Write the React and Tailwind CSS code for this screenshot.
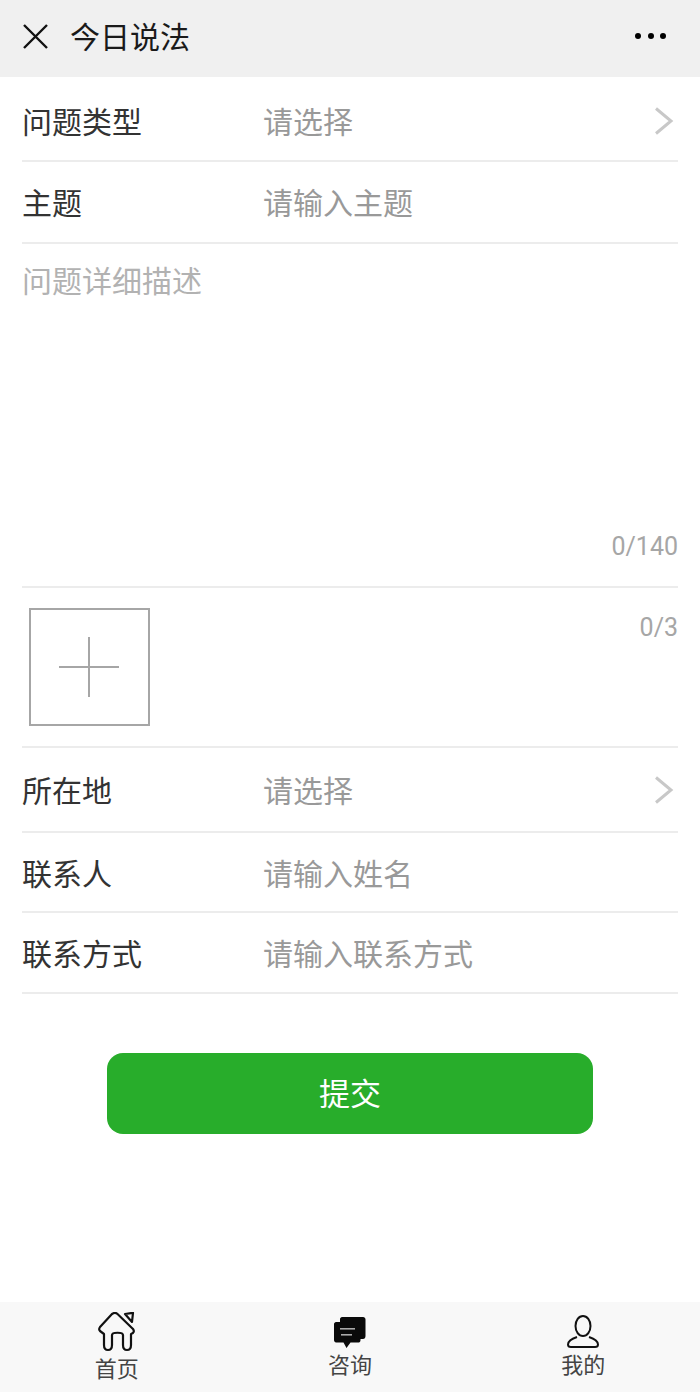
const Chevron = () => (
  <svg width="20" height="28" viewBox="0 0 20 28" fill="none" className="shrink-0 mt-[3px] mr-[4px]">
    <path d="M2 1.500 L17 14 L2 26.500" stroke="#c8c8c8" strokeWidth="3" />
  </svg>
);

const Row = ({ label, value, height, arrow }) => (
  <div className={`flex items-center border-b-2 border-[#ececec] ${height}`}>
    <div className="w-[241px] text-[30px] text-[#333333] leading-none">{label}</div>
    <div className="flex-1 text-[30px] text-[#999999] leading-none">{value}</div>
    {arrow && <Chevron />}
  </div>
);

const TabItem = ({ icon, label, textClass }) => (
  <div className="flex flex-col items-center">
    {icon}
    <span className={`text-[22px] leading-none text-[#444444] ${textClass}`}>{label}</span>
  </div>
);

const HomeIcon = (
  <svg width="38" height="40" viewBox="0 0 38 40" fill="none" stroke="#111111" strokeWidth="2.2" strokeLinejoin="round">
    <path d="M10 38 C7 38 6 36 6 33 V22 L2 19 C0.8 17.8 1 16.5 2 15 L14 2 C16 0.6 18 0.6 19.5 2 L35 17 C36.5 19 36 21 33 22 V33 C33 36 32 38 29 38 C26 38 25 36 25 33 V23 C25 20 14 20 14 23 V33 C14 36 13 38 10 38 Z" />
    <path d="M27 2 L35 0.8 L34 10 Z" />
  </svg>
);

const ChatIcon = (
  <svg width="32" height="32" viewBox="0 0 32 32">
    <path d="M8 1 H29 C30.5 1 31.5 2 31.5 3.500 V20 C31.5 22 30.500 23 29 23 H24 V8 H6 V3 C6 2 7 1 8 1 Z" fill="#0a0a0a" />
    <path d="M2 6 H24 C25.500 6 26.500 7 26.500 8.500 V24 C26.500 26 25.500 26.500 24 26.500 H16.500 L12.500 32 L9.500 26.500 H2 C1 26.500 0 25.500 0 24 V8 C0 7 1 6 2 6 Z" fill="#0a0a0a" />
    <rect x="6" y="12" width="15" height="1.600" fill="#aaaaaa" />
    <rect x="7" y="18" width="11" height="1.600" fill="#aaaaaa" />
  </svg>
);

const UserIcon = (
  <svg width="32" height="34" viewBox="0 0 32 34" fill="none" stroke="#111111" strokeWidth="2">
    <ellipse cx="16" cy="11" rx="7.500" ry="10" />
    <path d="M10 22 C4 24 1 26 1 29.500 C1 31 2 32 4 32 H28 C30 32 31 31 31 29.500 C31 26 28 24 22 22" />
  </svg>
);

export default function App() {
  return (
    <div className="w-[700px] h-[1392px] flex flex-col bg-white font-['Noto_Sans_CJK_SC','Liberation_Sans',sans-serif]">
      <header className="h-[77px] bg-[#f0f0f0] flex items-center pl-[23px] pr-[34px] pb-[5px] shrink-0">
        <svg width="25" height="25" viewBox="0 0 25 25" stroke="#111111" strokeWidth="2.4">
          <path d="M1 1 L24 24 M24 1 L1 24" />
        </svg>
        <span className="ml-[22px] mb-[3px] text-[30px] leading-none text-[#1a1a1a]">今日说法</span>
        <div className="ml-auto flex gap-[6.5px]">
          <span className="w-[6px] h-[6px] rounded-full bg-black"></span>
          <span className="w-[6px] h-[6px] rounded-full bg-black"></span>
          <span className="w-[6px] h-[6px] rounded-full bg-black"></span>
        </div>
      </header>

      <main className="flex-1 px-[22px]">
        <Row label="问题类型" value="请选择" height="h-[85px] pt-[2px]" arrow />
        <Row label="主题" value="请输入主题" height="h-[82px] pb-[2px]" />

        <div className="h-[344px] border-b-2 border-[#ececec] flex flex-col pt-[20px] pb-[27px]">
          <div className="text-[30px] leading-none text-[#b2b2b2]">问题详细描述</div>
          <div className="mt-auto text-right text-[25px] leading-none text-[#a6a6a6] font-['Roboto',sans-serif]">0/140</div>
        </div>

        <div className="h-[160px] border-b-2 border-[#ececec] flex justify-between pl-[7px] pt-[20px]">
          <div className="w-[121px] h-[118px] border-2 border-[#a6a6a6] flex items-center justify-center">
            <svg width="60" height="60" viewBox="0 0 60 60" stroke="#a6a6a6" strokeWidth="2" className="mr-[2px]">
              <path d="M30 0 V60 M0 30 H60" />
            </svg>
          </div>
          <div className="text-[25px] leading-none text-[#a6a6a6] pt-[7px] font-['Roboto',sans-serif]">0/3</div>
        </div>

        <Row label="所在地" value="请选择" height="h-[85px] pb-[2px]" arrow />
        <Row label="联系人" value="请输入姓名" height="h-[80px]" />
        <Row label="联系方式" value="请输入联系方式" height="h-[81px] pb-[2px]" />

        <button className="block mx-auto mt-[59px] w-[486px] h-[81px] pb-[4px] rounded-[16px] bg-[#28ad2b] text-white text-[31px] leading-none">
          提交
        </button>
      </main>

      <nav className="h-[90px] bg-[#f8f8f8] grid grid-cols-3 shrink-0 pt-[10px]">
        <TabItem icon={HomeIcon} label="首页" textClass="mt-[4px]" />
        <TabItem icon={<div className="mt-[4px]">{ChatIcon}</div>} label="咨询" textClass="mt-[4px]" />
        <TabItem icon={<div className="mt-[3px]">{UserIcon}</div>} label="我的" textClass="mt-[3px]" />
      </nav>
    </div>
  );
}
